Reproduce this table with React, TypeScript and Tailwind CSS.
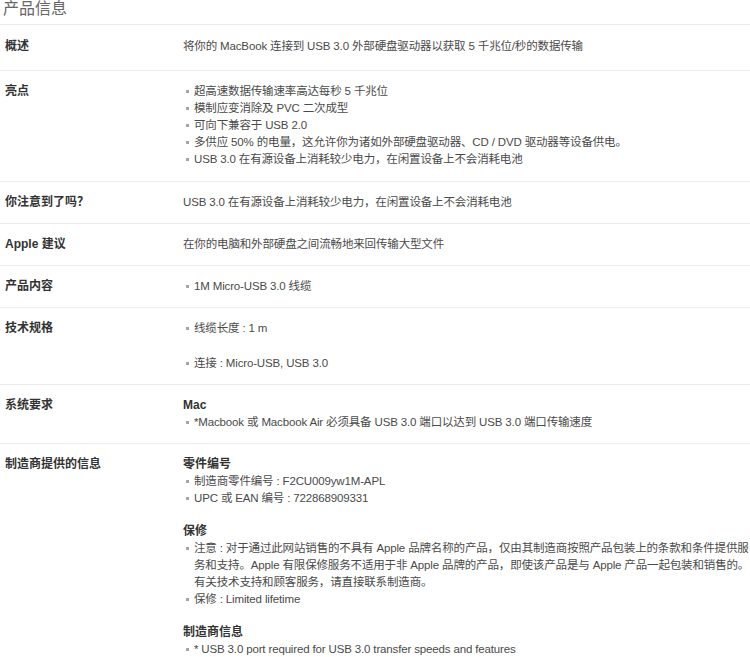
import React from 'react'

type Item = string | string[]

type Block = { heading?: string; items: Item[]; gap?: boolean }

type Row = { label: string; text?: string; items?: Item[]; spaced?: boolean; blocks?: Block[] }

const rows: Row[] = [
  { label: '概述', text: '将你的 MacBook 连接到 USB 3.0 外部硬盘驱动器以获取 5 千兆位/秒的数据传输' },
  {
    label: '亮点',
    items: [
      '超高速数据传输速率高达每秒 5 千兆位',
      '模制应变消除及 PVC 二次成型',
      '可向下兼容于 USB 2.0',
      '多供应 50% 的电量，这允许你为诸如外部硬盘驱动器、CD / DVD 驱动器等设备供电。',
      'USB 3.0 在有源设备上消耗较少电力，在闲置设备上不会消耗电池',
    ],
  },
  { label: '你注意到了吗？', text: 'USB 3.0 在有源设备上消耗较少电力，在闲置设备上不会消耗电池' },
  { label: 'Apple 建议', text: '在你的电脑和外部硬盘之间流畅地来回传输大型文件' },
  { label: '产品内容', items: ['1M Micro-USB 3.0 线缆'] },
  { label: '技术规格', items: ['线缆长度 : 1 m', '连接 : Micro-USB, USB 3.0'], spaced: true },
  {
    label: '系统要求',
    blocks: [{ heading: 'Mac', items: ['*Macbook 或 Macbook Air 必须具备 USB 3.0 端口以达到 USB 3.0 端口传输速度'] }],
  },
  {
    label: '制造商提供的信息',
    blocks: [
      { heading: '零件编号', items: ['制造商零件编号 : F2CU009yw1M-APL', 'UPC 或 EAN 编号 : 722868909331'] },
      {
        heading: '保修',
        gap: true,
        items: [
          [
            '注意 : 对于通过此网站销售的不具有 Apple 品牌名称的产品，仅由其制造商按照产品包装上的条款和条件提供服',
            '务和支持。Apple 有限保修服务不适用于非 Apple 品牌的产品，即使该产品是与 Apple 产品一起包装和销售的。',
            '有关技术支持和顾客服务，请直接联系制造商。',
          ],
          '保修 : Limited lifetime',
        ],
      },
      { heading: '制造商信息', gap: true, items: ['* USB 3.0 port required for USB 3.0 transfer speeds and features'] },
    ],
  },
]

function Bullets({ items, spaced }: { items: Item[]; spaced?: boolean }) {
  return (
    <ul className={spaced ? 'flex flex-col gap-[18px]' : ''}>
      {items.map((it, i) => (
        <li key={i} className="flex">
          <span className="w-[11px] shrink-0 pt-[7px] pl-[3px]">
            <span className="block w-[3px] h-[3px] bg-[#a5a5a5]" />
          </span>
          {typeof it === 'string' ? (
            <span>{it}</span>
          ) : (
            <span className="whitespace-nowrap">
              {it.map((line, j) => (
                <span key={j} className="block">{line}</span>
              ))}
            </span>
          )}
        </li>
      ))}
    </ul>
  )
}

export default function App() {
  return (
    <div
      className="w-[750px] overflow-hidden bg-white text-[11.5px] leading-[17px] tracking-[-0.15px] text-[#4a4a4a]"
      style={{ fontFamily: '"Liberation Sans", "Noto Sans CJK SC", sans-serif' }}
    >
      <div className="h-[25px] border-b border-[#ececec] pl-[3px] text-[16px] leading-[18px] tracking-normal text-[#666]">产品信息</div>

      {rows.map((r, i) => (
        <div key={r.label} className={`flex border-b border-[#ececec] ${i === 0 ? 'pt-[13px] pb-[15px]' : i === 1 ? 'pt-3 pb-[13px]' : 'py-3'}`}>
          <div className="w-[183px] shrink-0 pl-[5px] text-[12px] font-bold tracking-normal text-[#333]">{r.label}</div>
          <div className="flex-1">
            {r.text && <p>{r.text}</p>}
            {r.items && <Bullets items={r.items} spaced={r.spaced} />}
            {r.blocks &&
              r.blocks.map((b) => (
                <div key={b.heading} className={b.gap ? 'mt-[16px]' : ''}>
                  <p className="text-[12px] font-bold tracking-normal text-[#333]">{b.heading}</p>
                  <Bullets items={b.items} />
                </div>
              ))}
          </div>
        </div>
      ))}
    </div>
  )
}
